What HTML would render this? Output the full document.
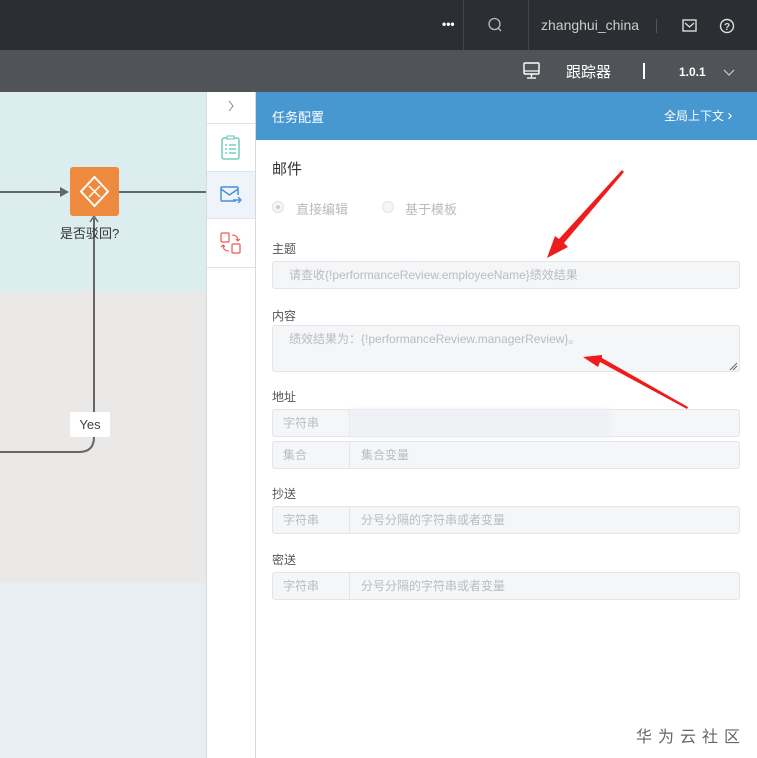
<!DOCTYPE html>
<html><head><meta charset="utf-8"><style>
*{margin:0;padding:0;box-sizing:border-box}
body{width:757px;height:758px;overflow:hidden;position:relative;background:#fff;font-family:"Liberation Sans","Noto Sans CJK SC",sans-serif;font-size:13px}
.abs{position:absolute}
.lbl{position:absolute;left:272px;font-size:12px;color:#555}
.inp{position:absolute;left:272px;width:468px;height:28px;background:#f5f6f8;border:1px solid #e3e5e9;border-radius:3px;color:#b8bcc2;font-size:12px;line-height:26px}
.pre{position:absolute;left:0;top:0;width:77px;height:26px;border-right:1px solid #e3e5e9;padding-left:10px}
.val{position:absolute;left:88px;top:0}
</style></head><body>
<div class="abs" style="left:0;top:0;width:757px;height:50px;background:#2b2e33"></div>
<div class="abs" style="left:463px;top:0;width:1px;height:50px;background:#44484e"></div>
<div class="abs" style="left:528px;top:0;width:1px;height:50px;background:#44484e"></div>
<div class="abs" style="left:442px;top:17px;color:#fff;font-size:12px;font-weight:bold">•••</div>
<svg class="abs" style="left:487px;top:17px" width="16" height="16"><circle cx="7.5" cy="7" r="5.5" fill="none" stroke="#bbb" stroke-width="1.3"/><line x1="11" y1="11" x2="14" y2="14" stroke="#bbb" stroke-width="1.3"/></svg>
<div class="abs" style="left:541px;top:17px;color:#ccc;font-size:14px">zhanghui_china</div>
<div class="abs" style="left:656px;top:19px;width:1px;height:14px;background:#555"></div>
<svg class="abs" style="left:682px;top:19px" width="16" height="14"><rect x="1" y="1" width="13" height="11" fill="none" stroke="#ddd" stroke-width="1.4"/><path d="M3 4 L7.5 8 L12 4" fill="none" stroke="#ddd" stroke-width="1.3"/></svg>
<svg class="abs" style="left:719px;top:18px" width="16" height="16"><circle cx="8" cy="8" r="6.5" fill="none" stroke="#ddd" stroke-width="1.4"/><text x="8" y="12" font-size="10" text-anchor="middle" fill="#ddd" font-family="Liberation Sans" font-weight="bold">?</text></svg>
<div class="abs" style="left:0;top:50px;width:757px;height:42px;background:#505458"></div>
<svg class="abs" style="left:522px;top:62px" width="20" height="18"><rect x="2" y="1" width="15" height="11" rx="1" fill="none" stroke="#fff" stroke-width="1.4"/><line x1="2" y1="9" x2="17" y2="9" stroke="#fff" stroke-width="1.2"/><line x1="9.5" y1="12" x2="9.5" y2="15" stroke="#fff" stroke-width="1.4"/><line x1="5" y1="16" x2="14" y2="16" stroke="#fff" stroke-width="1.4"/></svg>
<div class="abs" style="left:566px;top:61px;color:#fff;font-size:15px">跟踪器</div>
<div class="abs" style="left:643px;top:63px;width:2px;height:16px;background:#fff"></div>
<div class="abs" style="left:679px;top:65px;color:#fff;font-size:12px;font-weight:bold">1.0.1</div>
<svg class="abs" style="left:722px;top:68px" width="14" height="10"><path d="M2 2 L7 7 L12 2" fill="none" stroke="#ccc" stroke-width="1.2"/></svg>
<div class="abs" style="left:0;top:92px;width:207px;height:199px;background:#dcedf0"></div>
<div class="abs" style="left:0;top:291px;width:207px;height:292px;background:#ebe9e7"></div>
<div class="abs" style="left:0;top:583px;width:207px;height:175px;background:#e9eef2"></div>
<svg class="abs" style="left:0;top:92px" width="207" height="666">
<line x1="0" y1="100" x2="64" y2="100" stroke="#666" stroke-width="2"/>
<path d="M60 95 L69 100 L60 105Z" fill="#666"/>
<line x1="119" y1="100" x2="207" y2="100" stroke="#666" stroke-width="2"/>
<path d="M94 126 L94 345 Q94 360 79 360 L0 360" fill="none" stroke="#666" stroke-width="2"/>
<path d="M90 130 L94 124 L98 130" fill="none" stroke="#666" stroke-width="1.5"/>
<rect x="70" y="75" width="49" height="49" rx="3" fill="#ee8a3e"/>
<path d="M94.5 85 L108 99.5 L94.5 114 L81 99.5Z" fill="none" stroke="#fff" stroke-width="2"/>
<path d="M89 94 L100 105 M100 94 L89 105" stroke="#fff" stroke-width="1.5"/>
</svg>
<div class="abs" style="left:60px;top:223px;font-size:13px;color:#333">是否驳回?</div>
<div class="abs" style="left:70px;top:412px;width:40px;height:25px;background:#fff;border-radius:2px;font-size:13px;color:#444;text-align:center;line-height:25px">Yes</div>
<div class="abs" style="left:206px;top:92px;width:50px;height:666px;background:#fff;border-left:1px solid #d5dade;border-right:1px solid #d5dade"></div>
<div class="abs" style="left:207px;top:123px;width:48px;height:1px;background:#e2e5e8"></div>
<div class="abs" style="left:207px;top:171px;width:48px;height:48px;background:#eef4f9;border-top:1px solid #e2e5e8;border-bottom:1px solid #e2e5e8"></div>
<div class="abs" style="left:207px;top:267px;width:48px;height:1px;background:#e2e5e8"></div>
<svg class="abs" style="left:226px;top:99px" width="10" height="14"><path d="M3 2 L7 7 L3 12" fill="none" stroke="#888" stroke-width="1"/></svg>
<svg class="abs" style="left:220px;top:135px" width="22" height="26"><rect x="2" y="3" width="17" height="21" rx="2" fill="none" stroke="#5cc4b0" stroke-width="1.3"/><rect x="7" y="1" width="7" height="3" fill="#fff" stroke="#5cc4b0"/><path d="M5 10h2M9 10h7M5 14h2M9 14h7M5 18h2M9 18h7" stroke="#5cc4b0" stroke-width="1.2"/></svg>
<svg class="abs" style="left:219px;top:184px" width="24" height="22"><path d="M17 17 H3 a1 1 0 0 1-1-1 V4 a1 1 0 0 1 1-1 H18 a1 1 0 0 1 1 1 V11" fill="none" stroke="#4a90d9" stroke-width="1.5"/><path d="M2 5 L10.5 11 L19 5" fill="none" stroke="#4a90d9" stroke-width="1.5"/><path d="M14 16 H22 M19 13 L22 16 L19 19" fill="none" stroke="#4a90d9" stroke-width="1.4"/></svg>
<svg class="abs" style="left:219px;top:231px" width="24" height="24"><rect x="2" y="2" width="8" height="9" rx="1" fill="none" stroke="#e55" stroke-width="1.2"/><rect x="13" y="13" width="8" height="9" rx="1" fill="none" stroke="#e55" stroke-width="1.2"/><path d="M13 4 Q19 4 19 10 M17 8 L19 10 L21 8 M10 20 Q4 20 4 14 M2 16 L4 14 L6 16" fill="none" stroke="#e55" stroke-width="1.1"/></svg>
<div class="abs" style="left:256px;top:92px;width:501px;height:48px;background:#4798d0"></div>
<div class="abs" style="left:272px;top:107px;color:#fff;font-size:13px">任务配置</div>
<div class="abs" style="left:664px;top:107px;color:#fff;font-size:12px">全局上下文 <span style="font-size:15px">›</span></div>
<div class="abs" style="left:272px;top:158px;color:#333;font-size:15px">邮件</div>
<div class="abs" style="left:272px;top:201px;width:12px;height:12px;border:1px solid #dde0e4;border-radius:50%;background:#f5f6f8"><div style="margin:3px;width:4px;height:4px;border-radius:50%;background:#c8ccd2"></div></div>
<div class="abs" style="left:296px;top:199px;color:#bbb;font-size:13px">直接编辑</div>
<div class="abs" style="left:382px;top:201px;width:12px;height:12px;border:1px solid #e2e4e8;border-radius:50%;background:#f5f6f8"></div>
<div class="abs" style="left:405px;top:199px;color:#bbb;font-size:13px">基于模板</div>
<div class="lbl" style="top:240px">主题</div>
<div class="inp" style="top:261px;padding-left:16px">请查收{!performanceReview.employeeName}绩效结果</div>
<div class="lbl" style="top:307px">内容</div>
<div class="inp" style="top:325px;height:47px;padding-left:16px">绩效结果为：{!performanceReview.managerReview}。</div>
<svg class="abs" style="left:729px;top:362px" width="9" height="9"><path d="M1 8 L8 1 M4 8 L8 4" stroke="#666" stroke-width="1"/></svg>
<div class="lbl" style="top:388px">地址</div>
<div class="inp" style="top:409px"><div class="pre">字符串</div></div>
<div class="abs" style="left:350px;top:409px;width:260px;height:28px;background:#eef0f3;filter:blur(3px)"></div>
<div class="inp" style="top:441px"><div class="pre">集合</div><div class="val">集合变量</div></div>
<div class="lbl" style="top:485px">抄送</div>
<div class="inp" style="top:506px"><div class="pre">字符串</div><div class="val">分号分隔的字符串或者变量</div></div>
<div class="lbl" style="top:551px">密送</div>
<div class="inp" style="top:572px"><div class="pre">字符串</div><div class="val">分号分隔的字符串或者变量</div></div>
<svg class="abs" style="left:0;top:0" width="757" height="758">
<path d="M624 172 L564 243 L568 247 L547 258 L555 236 L559 239 L622 170 Z" fill="#ee1c1c"/>
<path d="M687 409 L600 362 L598 367 L583 357 L602 355 L602 358 L688 407 Z" fill="#ee1c1c"/>
</svg>
<div class="abs" style="left:636px;top:723px;color:#666;font-size:16px;letter-spacing:6px">华为云社区</div>
</body></html>
